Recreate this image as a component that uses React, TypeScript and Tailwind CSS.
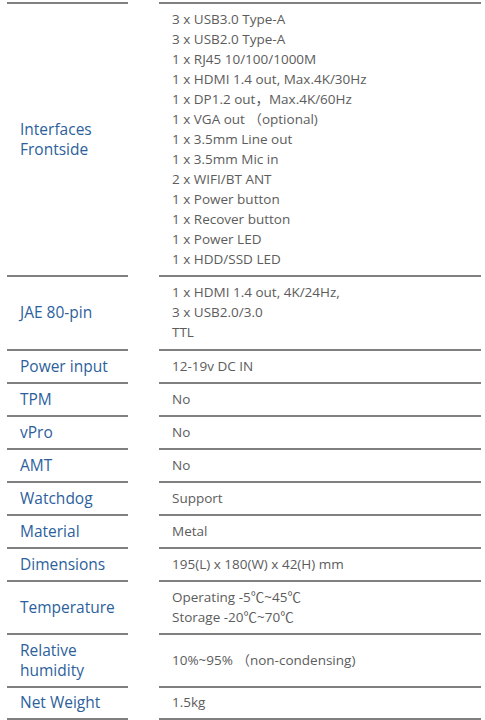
const ROWS: { label: string[]; values: string[]; h: string }[] = [
  {
    label: ["Interfaces", "Frontside"],
    values: [
      "3 x USB3.0 Type-A",
      "3 x USB2.0 Type-A",
      "1 x RJ45 10/100/1000M",
      "1 x HDMI 1.4 out, Max.4K/30Hz",
      "1 x DP1.2 out，Max.4K/60Hz",
      "1 x VGA out （optional)",
      "1 x 3.5mm Line out",
      "1 x 3.5mm Mic in",
      "2 x WIFI/BT ANT",
      "1 x Power button",
      "1 x Recover button",
      "1 x Power LED",
      "1 x HDD/SSD LED",
    ],
    h: "h-[273px]",
  },
  {
    label: ["JAE 80-pin"],
    values: ["1 x HDMI 1.4 out, 4K/24Hz,", "3 x USB2.0/3.0", "TTL"],
    h: "h-[74px]",
  },
  { label: ["Power input"], values: ["12-19v DC IN"], h: "h-[33px]" },
  { label: ["TPM"], values: ["No"], h: "h-[33px]" },
  { label: ["vPro"], values: ["No"], h: "h-[33px]" },
  { label: ["AMT"], values: ["No"], h: "h-[33px]" },
  { label: ["Watchdog"], values: ["Support"], h: "h-[33px]" },
  { label: ["Material"], values: ["Metal"], h: "h-[33px]" },
  { label: ["Dimensions"], values: ["195(L) x 180(W) x 42(H) mm"], h: "h-[33px]" },
  {
    label: ["Temperature"],
    values: ["Operating -5℃~45℃", "Storage -20℃~70℃"],
    h: "h-[53px]",
  },
  {
    label: ["Relative", "humidity"],
    values: ["10%~95% （non-condensing)"],
    h: "h-[53px]",
  },
  { label: ["Net Weight"], values: ["1.5kg"], h: "h-[32px]" },
];

export default function App() {
  return (
    <div
      className="w-[485px] h-[720px] bg-white overflow-hidden pt-[2px] pl-[7px]"
      style={{ fontFamily: '"Open Sans", "Noto Sans CJK SC", sans-serif' }}
    >
      <div className="grid grid-cols-[121px_322px] gap-x-[31px]">
        <div className="h-[2px] bg-[#808080]" />
        <div className="h-[2px] bg-[#808080]" />
        {ROWS.map((row, i) => (
          <div key={i} className="contents">
            <div
              className={`${row.h} border-b-2 border-[#808080] flex flex-col justify-center pl-[13px] pb-[2px] text-[15.5px] leading-[20px] text-[#2d5f9c]`}
            >
              {row.label.map((l) => (
                <span key={l}>{l}</span>
              ))}
            </div>
            <div
              className={`${row.h} border-b-2 border-[#808080] flex flex-col justify-center pl-[13px] pb-[2px] text-[13.5px] leading-[20px] text-[#5c5c5c]`}
            >
              {row.values.map((v) => (
                <span key={v} className="whitespace-nowrap">
                  {v}
                </span>
              ))}
            </div>
          </div>
        ))}
      </div>
    </div>
  );
}
